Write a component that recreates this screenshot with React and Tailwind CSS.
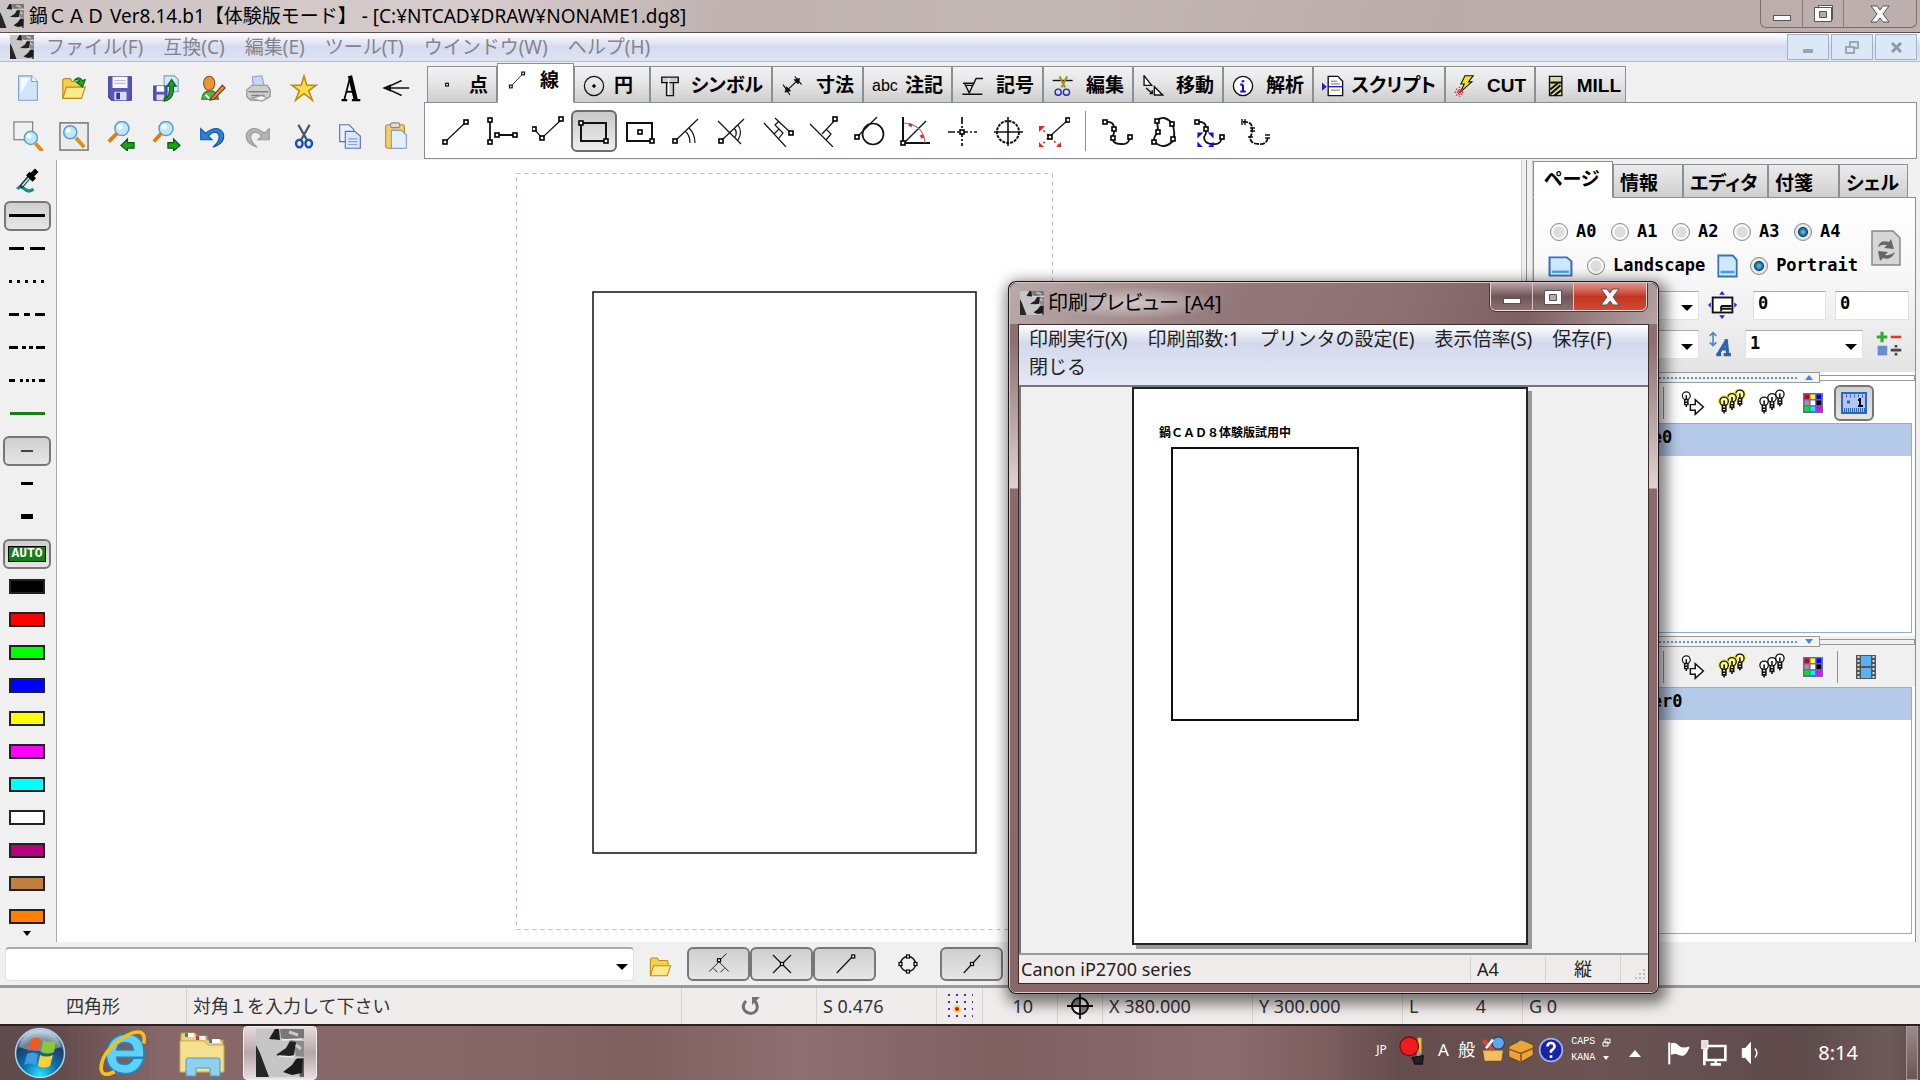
import React, { useState } from "react";
import clsx from "clsx";

/* ---------- shared drawing helpers ---------- */

const Node = ({ x, y }) => (
  <rect x={x - 2} y={y - 2} width="4" height="4" fill="#fff" stroke="#000" strokeWidth="1.6" />
);

const Ico = ({ size = 32, children, className }) => (
  <svg
    width={size}
    height={size}
    viewBox="0 0 32 32"
    fill="none"
    stroke="#111"
    strokeWidth="1.2"
    className={clsx("shrink-0", className)}
    aria-hidden="true"
  >
    {children}
  </svg>
);

const Logo = ({ className }) => (
  <svg viewBox="0 0 48 48" preserveAspectRatio="none" className={className} aria-hidden="true">
    <rect width="48" height="48" fill="#c6c6c6" />
    <path d="M0 16 L4 24 L10 40 L13 48 H0 Z" fill="#262626" />
    <path d="M24 0 H48 V9 L36 12 L25 9 Z" fill="#777" />
    <path d="M37 12 H48 V28 L40 27 Z" fill="#8a8a8a" />
    <path d="M41 29 H48 V48 H44 Z" fill="#5c5c5c" />
    <path d="M19 0 L13 10 L24 11 L23 0 Z" fill="#1c1c1c" />
    <path d="M34 12 L30 19 L20 26 L29 28 L38 26 L40 13 Z" fill="#222" />
    <path d="M40 30 L36 36 L27 43 L36 46 L46 44 L47 30 Z" fill="#1a1a1a" />
    <path d="M26 11 L46 10 M23 27 L38 28" stroke="#efefef" strokeWidth="1.5" />
    <path d="M33 3 L42 6 M40 16 L45 20" stroke="#c9c9c9" strokeWidth="3" />
  </svg>
);

const Lens = ({ cx, cy, r = 7 }) => (
  <>
    <circle cx={cx} cy={cy} r={r} fill="#bfe6fb" stroke="#5a9fd0" strokeWidth="1.6" />
    <circle cx={cx - 2} cy={cy - 2} r={r / 2.6} fill="#f4fcff" stroke="none" />
  </>
);

const Folder = () => (
  <>
    <path d="M4 27 V8 q0-2 2-2 h6 l2 3 h9 q2 0 2 2 v4" fill="#f3cf52" stroke="#b98a14" />
    <path d="M4 27 L8 15 H28 L24 27 Z" fill="#ffe98a" stroke="#b98a14" />
  </>
);

/* ---------- main toolbar ---------- */

const fileTools = [
  { name: "新規", icon: (<>
    <path d="M6 3 H20 L26 9 V29 H6 Z" fill="#cfe5fa" stroke="#7aa3cf" />
    <path d="M20 3 V9 H26" fill="#fff" stroke="#7aa3cf" />
    <path d="M8 5 H18 L8 22 Z" fill="#f3f9ff" stroke="none" /></>) },
  { name: "開く", icon: (<><Folder />
    <path d="M16 8 q5-6 9 0 l3-1 l-3 8 l-6-5 l3-1 q-2-3-6-1z" fill="#27a327" stroke="#0c6b0c" /></>) },
  { name: "保存", icon: (<>
    <path d="M4 4 H28 V29 H7 L4 26 Z" fill="#5a55b8" stroke="#3a3690" />
    <rect x="8" y="4" width="16" height="12" fill="#f6f6fc" stroke="none" />
    <path d="M10 8 H22 M10 11 H22" stroke="#b9b9cf" />
    <rect x="10" y="20" width="13" height="9" fill="#dcdcee" stroke="none" />
    <rect x="12" y="21" width="4" height="7" fill="#3a3690" stroke="none" /></>) },
  { name: "書き出し", icon: (<>
    <path d="M14 3 H25 L29 7 V20 H14 Z" fill="#d4e7fb" stroke="#7aa3cf" />
    <path d="M3 14 H17 V29 H3 Z" fill="#5a55b8" stroke="#3a3690" />
    <rect x="6" y="14" width="8" height="6" fill="#fff" stroke="none" />
    <rect x="6" y="23" width="8" height="6" fill="#dcdcee" stroke="none" />
    <path d="M14 27 q6 0 6-13 h-3 l5-7 l5 7 h-3 q1 14-10 16z" fill="#1f9d2c" stroke="#0b6316" /></>) },
  { name: "ユーザー", icon: (<>
    <path d="M5 28 q1-9 9-9 q8 0 9 9z" fill="#55b04a" stroke="#2e7a28" />
    <ellipse cx="13" cy="11" rx="6" ry="7.500" fill="#e8953a" stroke="#9a5410" />
    <path d="M15 27 L27 13 L30 16 L18 28 L14 29Z" fill="#f08a3c" stroke="#7a3a10" />
    <path d="M9 23 l4 4" stroke="#fff" strokeWidth="2" /></>) },
  { name: "印刷", icon: (<>
    <path d="M10 4 L20 3 L23 15 H11 Z" fill="#c9d6f5" stroke="#93a3cc" />
    <path d="M4 18 L10 13 H26 L29 18 V25 L22 29 H8 L4 25Z" fill="#cfcfcf" stroke="#8f8f8f" />
    <path d="M6 20 H27 M9 24 H23" stroke="#808080" strokeWidth="1.6" />
    <path d="M9 27 L20 24 L26 27 L20 30Z" fill="#f4f4f4" stroke="#999" /></>) },
  { name: "お気に入り", icon: (
    <path d="M16 3 L19 13 L29 13 L21 19 L25 29 L16 22 L7 29 L11 19 L3 13 L13 13Z" fill="#ffd84a" stroke="#b98a14" strokeWidth="1.6" />) },
  { name: "文字", icon: (<>
    <path d="M7 29 H13 M18 29 H27" stroke="#000" strokeWidth="2.500" />
    <path d="M10 28 L16 5" stroke="#000" strokeWidth="1.800" />
    <path d="M16 3 L22 28" stroke="#000" strokeWidth="4.500" />
    <path d="M12 20 H21" stroke="#000" strokeWidth="2" /></>) },
  { name: "引出", icon: (<>
    <path d="M3 16 H30 M7 15 L22 8 M7 17 L22 24" strokeWidth="1.600" />
    <path d="M3 16 L10 13 V19Z" fill="#111" /></>) },
];

const viewTools = [
  { name: "範囲拡大", icon: (<>
    <rect x="1" y="1" width="20" height="19" stroke="#777" />
    <Lens cx={19} cy={18} r={7} /><path d="M24 24 L32 33" stroke="#d8901c" strokeWidth="4" /></>) },
  { name: "全体表示", icon: (<>
    <rect x="1" y="2" width="30" height="29" fill="#ececec" stroke="#777" strokeWidth="1.600" />
    <Lens cx={12} cy={12} r={7} /><path d="M18 18 L27 28" stroke="#d8901c" strokeWidth="4" /></>) },
  { name: "前の表示", icon: (<>
    <Lens cx={18} cy={8} r={7.5} /><path d="M13 13 L4 22" stroke="#d8801c" strokeWidth="4" />
    <path d="M17 26 L24 19 V23 H31 V29 H24 V32Z" fill="#1f9d1f" stroke="#0b5a0b" /></>) },
  { name: "次の表示", icon: (<>
    <Lens cx={16} cy={8} r={7.5} /><path d="M11 13 L3 22" stroke="#d8801c" strokeWidth="4" />
    <path d="M31 26 L24 19 V23 H18 V29 H24 V32Z" fill="#1f9d1f" stroke="#0b5a0b" /></>) },
  { name: "元に戻す", icon: (
    <path d="M4 8 V20 H16 L12 16 Q19 9 23 14 Q26 20 17 28 Q31 23 28 13 Q22 3 9 13Z" fill="#2e7fd6" stroke="#0f55a5" />) },
  { name: "やり直し", icon: (
    <path d="M28 8 V20 H16 L20 16 Q13 9 9 14 Q6 20 15 28 Q1 23 4 13 Q10 3 23 13Z" fill="#b4b4b4" stroke="#999" />) },
  { name: "切り取り", icon: (<>
    <path d="M10 4 L19 20 M22 4 L13 20" stroke="#456" strokeWidth="2.400" />
    <ellipse cx="11" cy="24" rx="3.500" ry="4" stroke="#1c55b8" strokeWidth="2.600" />
    <ellipse cx="21" cy="24" rx="3.500" ry="4" stroke="#1c55b8" strokeWidth="2.600" /></>) },
  { name: "コピー", icon: (<>
    <path d="M5 4 H15 L20 9 V22 H5Z" fill="#eaf1fc" stroke="#5a6fb5" />
    <path d="M11 11 H21 L27 16 V29 H11Z" fill="#dbe8fb" stroke="#5a6fb5" />
    <path d="M14 19 H24 M14 22 H24 M14 25 H24" stroke="#8aa0d6" /></>) },
  { name: "貼り付け", icon: (<>
    <rect x="5" y="4" width="20" height="25" rx="2" fill="#f6cf6b" stroke="#b98a2a" />
    <rect x="10" y="2" width="10" height="5" rx="2" fill="#ddd" stroke="#888" />
    <path d="M11 10 H22 L27 15 V29 H11Z" fill="#e5effc" stroke="#7f9acb" /></>) },
];

const commandTabs = [
  { label: "点", width: "w-[70px]", pad: "pr-2", icon: <Node x={16} y={14} /> },
  { label: "線", width: "w-[77px]", pad: "pr-3.5", icon: (<><path d="M8 23 L24 6" /><Node x={7} y={24} /><Node x={25} y={5} /></>) },
  { label: "円", width: "w-[76px]", pad: "pr-4", icon: (<><circle cx="16" cy="16" r="14" strokeWidth="1.800" /><circle cx="16" cy="16" r="2" fill="#000" /></>) },
  { label: "シンボル", width: "w-[122px]", pad: "pr-2", icon: (<>
    <path d="M4 3 H28 V11 H4Z M11 11 V30 H21 V11" fill="#ccc" strokeWidth="2" /><path d="M14 5 V29" stroke="#fff" strokeWidth="2" /></>) },
  { label: "寸法", width: "w-[91px]", pad: "pr-2", icon: (<>
    <path d="M9 22 L24 8 M3 14 L13 29 M20 2 L30 14" strokeWidth="1.600" /><path d="M6 25 L8 17 L14 23Z M27 5 L25 13 L19 7Z" fill="#111" /></>) },
  { label: "注記", width: "w-[89px]", pad: "pr-2", text: "abc" },
  { label: "記号", width: "w-[91px]", pad: "pr-2", icon: (<path d="M3 12 H20 M5 12 L12 26 L22 5 H32 M2 28 H31 M6 15 H18" strokeWidth="2" />) },
  { label: "編集", width: "w-[90px]", pad: "pr-2", icon: (<>
    <path d="M1 8 H30" strokeWidth="2" /><path d="M11 2 L19 18 M22 2 L14 18" stroke="#99931c" strokeWidth="3" />
    <circle cx="9" cy="25" r="4.500" stroke="#22c" strokeWidth="2" /><circle cx="21" cy="25" r="4.500" stroke="#22c" strokeWidth="2" /></>) },
  { label: "移動", width: "w-[90px]", pad: "pr-2", icon: (<>
    <path d="M3 1 V15 H14Z M18 17 V29 H30Z" fill="#fff" strokeWidth="2" /><path d="M6 19 L15 27 M11 27 H15 V22" strokeWidth="2" /></>) },
  { label: "解析", width: "w-[90px]", pad: "pr-2", icon: (<>
    <circle cx="16" cy="16" r="14" fill="#fff" strokeWidth="2" /><path d="M16 14 V24 M12 14 H16 M12 24 H20 M14 9 H18" stroke="#11c" strokeWidth="3" /></>) },
  { label: "スクリプト", width: "w-[132px]", pad: "pr-2", icon: (<>
    <path d="M9 2 H23 L30 9 V30 H9Z" fill="#fff" strokeWidth="2" /><path d="M13 9 H22 M13 13 H26 M13 22 H26" stroke="#555" />
    <path d="M9 17 H30" stroke="#22c" strokeWidth="2" /><path d="M0 11 L7 17 L0 23Z" fill="#22c" stroke="none" /></>) },
  { label: "CUT", width: "w-[90px]", pad: "pr-2", icon: (<>
    <path d="M16 1 H28 L21 10 H26 L9 25 L15 13 H10Z" fill="#f4e52c" strokeWidth="1.600" />
    <path d="M3 20 L13 30 M3 30 L13 20 M8 17 V32 M1 25 H14" stroke="#e22" strokeDasharray="2 1.500" strokeWidth="2" /></>) },
  { label: "MILL", width: "w-[91px]", pad: "pr-1", icon: (<>
    <path d="M8 2 H26 V30 H8Z" fill="#d8d8a0" strokeWidth="2" /><path d="M9 11 H26" strokeWidth="3" />
    <path d="M9 28 L24 15 M9 21 L20 12 M15 30 L25 22" strokeWidth="3" /></>) },
];

const lineTools = [
  <><path d="M5 27 L26 7" /><Node x={5} y={27} /><Node x={26} y={7} /></>,
  <><path d="M4 5 V27 M11 20 H30" strokeWidth="1.800" /><Node x={4} y={5} /><Node x={4} y={27} /><Node x={11} y={20} /><Node x={29} y={20} /></>,
  <><path d="M2 14 L10 23 L30 4" /><Node x={2} y={14} /><Node x={10} y={23} /><Node x={29} y={4} /></>,
  <><path d="M3 8 H28 V26 H3Z" strokeWidth="2" /><Node x={3} y={8} /><Node x={28} y={26} /></>,
  <><path d="M3 8 H28 V26 H3Z" strokeWidth="2" /><Node x={16} y={17} /><Node x={28} y={26} /></>,
  <><path d="M5 26 L28 4 M15 16 Q20 20 20 28 M19 13 Q25 19 25 28" /><Node x={5} y={26} /></>,
  <><path d="M5 26 L28 4 M2 6 L25 29 M22 10 Q27 17 22 25 M18 13 Q22 17 19 22" /><Node x={5} y={26} /></>,
  <><path d="M2 8 L24 32 M13 3 L29 18 M12 19 L17 14 L13 10 L17 6 M17 14 L21 18 L17 23" /><Node x={29} y={18} /></>,
  <><path d="M2 9 L25 32 M28 4 L14 19 M18 14 L23 19 L18 25" /><Node x={27} y={4} /></>,
  <><circle cx="19" cy="19" r="10.500" strokeWidth="1.700" /><path d="M3 22 L23 2" /><Node x={3} y={22} /></>,
  <><path d="M3 2 V28 H30" strokeWidth="2" /><path d="M4 28 L26 6" /><path d="M4 8 Q24 10 25 28" stroke="#977" />
    <path d="M9 9 L12 11 M21 20 L23 23" stroke="#c33" strokeWidth="3" /><Node x={3} y={28} /></>,
  <><path d="M16 2 V31 M2 17 H31" strokeWidth="1.700" strokeDasharray="7 2 2 2" /><Node x={16} y={17} /></>,
  <><circle cx="16" cy="17" r="11" strokeWidth="2" strokeDasharray="3 1" /><path d="M16 2 V31 M2 17 H31 M11 17 H21 M16 11 V22" strokeWidth="1.600" /></>,
  <><path d="M11 22 L30 5" /><path d="M2 12 L22 32 M2 32 L11 22" stroke="#e22" strokeWidth="1.600" strokeDasharray="2 3" />
    <path d="M1 11 h6 l-6 6z M1 33 v-6 l6 6z M23 33 h-6 l6-6z" fill="#e22" stroke="none" /><Node x={12} y={22} /><Node x={30} y={5} /></>,
];

const curve = "M4 7 Q13 6 13 13 Q14 18 11 22 Q11 29 20 29 Q28 30 29 22";
const curveTools = [
  <><path d={curve} strokeWidth="1.800" /><Node x={4} y={7} /><Node x={13} y={14} /><Node x={12} y={23} /><Node x={29} y={22} /></>,
  <><path d="M10 6 Q16 -1 25 8 Q29 18 26 26 Q16 36 7 26 Q6 23 11 17 Q11 13 10 6Z" strokeWidth="1.800" />
    <Node x={10} y={6} /><Node x={25} y={9} /><Node x={26} y={24} /><Node x={11} y={17} /><Node x={7} y={27} /></>,
  <><path d={curve} strokeWidth="1.800" /><path d="M5 18 h4 l-4 4z M20 18 v4 l-4-4z M5 32 v-4 l4 4z M20 32 h-4 l4-4z" fill="#11e" stroke="#11e" />
    <Node x={4} y={7} /><Node x={13} y={14} /><Node x={29} y={22} /></>,
  <><path d={curve} strokeWidth="1.800" strokeDasharray="5 1" /><path d="M3 4 V10 M6 4 V10 M11 13 H16 M11 16 H16 M9 22 H14 M26 20 H31 M26 23 H31" strokeWidth="1.400" /></>,
];

const LeftTools = () => (
  <div className="flex w-[424px] flex-col gap-2 pl-[5px] pt-1.5">
    {[fileTools, viewTools].map((row, i) => (
      <div key={i} className="flex">
        {row.map((tool) => (
          <button key={tool.name} aria-label={tool.name} className="flex h-10 w-[46px] items-center justify-center">
            <Ico size={30}>{tool.icon}</Ico>
          </button>
        ))}
      </div>
    ))}
  </div>
);

const CommandPanel = () => {
  const [active, setActive] = useState("線");
  const [tool, setTool] = useState(3);

  return (
    <div className="flex flex-1 flex-col pr-[3px] pt-px">
      <div className="z-10 -mb-px flex h-10 items-end pl-[3px]">
        {commandTabs.map((tab) => (
          <button
            key={tab.label}
            onClick={() => setActive(tab.label)}
            className={clsx(
              "flex items-center justify-between overflow-hidden whitespace-nowrap border border-[#8c8e96] pl-2 text-[19px] font-bold leading-7 text-black",
              tab.width,
              tab.pad,
              active === tab.label
                ? "h-10 border-b-white bg-white pb-1"
                : "h-[37px] bg-gradient-to-b from-[#f2f2f2] via-[#e4e4e4] via-50% to-[#cdcdcd] pt-0.5"
            )}
          >
            {tab.text ? (
              <span className="text-[16px] font-normal">{tab.text}</span>
            ) : (
              <Ico size={22}>{tab.icon}</Ico>
            )}
            <span>{tab.label}</span>
          </button>
        ))}
      </div>
      <div className="flex h-[57px] items-center border border-[#8c8e96] bg-white pl-2">
        {lineTools.map((icon, i) => (
          <button
            key={i}
            aria-label={`線コマンド${i + 1}`}
            onClick={() => setTool(i)}
            className={clsx(
              "flex h-[42px] w-[46px] items-center justify-center",
              tool === i && "rounded-md border-2 border-[#6d6d6d] bg-gradient-to-b from-[#c9c9c9] to-[#ededed]"
            )}
          >
            <Ico>{icon}</Ico>
          </button>
        ))}
        <span className="mx-2 h-10 w-px bg-[#8c8e96]" />
        {curveTools.map((icon, i) => (
          <button key={i} aria-label={`曲線コマンド${i + 1}`} className="flex h-[42px] w-[46px] items-center justify-center">
            <Ico>{icon}</Ico>
          </button>
        ))}
      </div>
    </div>
  );
};

/* ---------- left palette ---------- */

const dashes = [
  ["実線", "0"],
  ["破線", "15 6"],
  ["点線", "3 5"],
  ["一点鎖線", "10 5 6 5"],
  ["二点鎖線", "9 4 4 3 4 3"],
  ["三点鎖線", "6 5 3 3 3 3 3 4"],
];

const swatches = [
  "bg-black", "bg-[#ff0000]", "bg-[#00ff00]", "bg-[#0000ff]", "bg-[#ffff00]", "bg-[#ff00ff]",
  "bg-[#00ffff]", "bg-white", "bg-[#b4007d]", "bg-[#c08040]", "bg-[#ff8000]",
];

const paletteCell = "flex h-[33px] w-[54px] shrink-0 items-center justify-center";
const pressed = "rounded-md border-2 border-[#777] bg-gradient-to-b from-[#cfcfcf] to-[#e6e6e6]";

const Palette = () => (
  <aside className="flex w-[57px] shrink-0 flex-col border-r border-[#aaa] bg-[#f0f0f0]">
    <div className="flex min-h-0 flex-1 flex-col overflow-hidden">
      <button aria-label="スポイト" className="flex h-[39px] w-[54px] shrink-0 items-center justify-center">
        <Ico size={26}>
          <path d="M4 27 Q8 22 13 27 T24 27" stroke="#1a8c94" strokeWidth="4" />
          <path d="M8 25 L20 11" stroke="#333" strokeWidth="5" />
          <path d="M10 23 L19 13" stroke="#8ff" strokeWidth="2" />
          <path d="M17 8 L25 16 M20 12 L28 4" stroke="#000" strokeWidth="6" />
        </Ico>
      </button>
      {dashes.map(([name, dash], i) => (
        <button key={name} aria-label={name} className={paletteCell}>
          <span className={clsx("flex h-[30px] w-[47px] items-center justify-center", i === 0 && pressed)}>
            <svg width="36" height="3"><path d="M0 1.500 H36" stroke="#000" strokeWidth="3" strokeDasharray={dash} /></svg>
          </span>
        </button>
      ))}
      <button aria-label="補助線" className={paletteCell}>
        <span className="h-[3px] w-[35px] bg-[#138013]" />
      </button>
      <button aria-label="細線" className={clsx(paletteCell, "mt-1")}>
        <span className={clsx("flex h-[30px] w-[48px] items-center justify-center", pressed)}>
          <span className="h-0.5 w-3 bg-[#444]" />
        </span>
      </button>
      <button aria-label="中線" className={paletteCell}><span className="h-[3px] w-3 bg-black" /></button>
      <button aria-label="太線" className={paletteCell}><span className="h-[5px] w-3 bg-black" /></button>
      <button className={clsx(paletteCell, "mt-1")}>
        <span className={clsx("flex h-[30px] w-[48px] items-center justify-center", pressed)}>
          <span className="border border-black bg-[#118011] px-0.5 font-['Liberation_Mono',monospace] text-[13px] font-bold leading-[14px] text-white">
            AUTO
          </span>
        </span>
      </button>
      {swatches.map((color, i) => (
        <button key={color} aria-label={`色${i + 1}`} className={paletteCell}>
          <span className={clsx("h-[15px] w-9 border-2 border-[#222]", color)} />
        </button>
      ))}
    </div>
    <button aria-label="下へ" className="flex h-[18px] w-[54px] items-center justify-center">
      <svg width="8" height="5"><path d="M0 0 H8 L4 5Z" /></svg>
    </button>
  </aside>
);

/* ---------- right side panel ---------- */

const sideTabs = [
  { label: "ページ", width: "w-[80px]" },
  { label: "情報", width: "w-[70px]" },
  { label: "エディタ", width: "w-[85px]" },
  { label: "付箋", width: "w-[71px]" },
  { label: "シェル", width: "w-[69px]" },
];

const Arrow = () => (
  <svg width="12" height="6" className="pointer-events-none absolute right-1.5 top-1/2"><path d="M0 0 H12 L6 6Z" /></svg>
);

const Select = ({ label, value, className }) => (
  <div className={clsx("relative h-[29px]", className)}>
    <select
      aria-label={label}
      defaultValue={value}
      className="h-full w-full appearance-none border border-[#e2e2e2] border-t-[#aaa] bg-white px-1 pb-1 font-bold"
    >
      <option>{value}</option>
    </select>
    <Arrow />
  </div>
);

const Radio = ({ name, label, defaultChecked, className }) => (
  <label className={clsx("flex items-center gap-2", className)}>
    <input
      type="radio"
      name={name}
      defaultChecked={defaultChecked}
      className="h-[18px] w-[18px] shrink-0 appearance-none rounded-full border border-[#8a8a8a] bg-[radial-gradient(circle,#ddd_45%,#fff_55%,#ccc)] checked:bg-[radial-gradient(circle,#4fb4e0_10%,#124a70_40%,#eee_50%,#ccc)]"
    />
    <span>{label}</span>
  </label>
);

const PageIcon = ({ wide }) => (
  <svg width={wide ? 25 : 21} height={wide ? 21 : 24} viewBox="0 0 24 24" preserveAspectRatio="none" className="shrink-0">
    <path d="M1.500 1.500 H18 L22.500 6 V22.500 H1.500Z" fill="#cfe8ff" stroke="#3a6fc0" strokeWidth="2" />
    <path d="M4 18 H20" stroke="#3f9fe8" strokeWidth="2.500" />
  </svg>
);

const Bulb = ({ x, y, lit }) => (
  <g transform={`translate(${x} ${y})`}>
    {lit && <circle cx="0" cy="0" r="7" fill="#f5f03c" stroke="none" />}
    <circle cx="0" cy="0" r="4.800" fill={lit ? "#fffb9a" : "#fff"} strokeWidth="1.500" />
    <path d="M-2 4 V11 H2 V4 M-2 8 H2 M0 11 V14 M0 -1 V4" strokeWidth="1.800" />
  </g>
);

const BulbRow = ({ lit }) => (
  <Ico size={28}>
    <Bulb x={25} y={6} lit={lit} /><Bulb x={16} y={10} lit={lit} /><Bulb x={7} y={14} lit={lit} />
  </Ico>
);

const gridColors = ["#d00", "#ff0", "#00f", "#999", "#fff", "#000", "#0e0", "#0ee", "#e0e"];

const LayerTools = ({ children }) => (
  <div className="flex h-10 items-center pl-[129px]">
    <span className="h-8 w-px bg-[#8c8e96]" />
    <button aria-label="次を表示" className="ml-3 flex w-8 justify-center">
      <Ico size={26}><Bulb x={9} y={7} /><path d="M14 18 H20 V12 L30 21 L20 30 V25 H14Z" fill="#fff" strokeWidth="1.800" /></Ico>
    </button>
    <button aria-label="全て表示" className="ml-2 flex w-8 justify-center"><BulbRow lit /></button>
    <button aria-label="全て非表示" className="ml-2 flex w-8 justify-center"><BulbRow /></button>
    <button aria-label="色" className="ml-[9px] flex w-8 justify-center">
      <svg width="20" height="20" viewBox="0 0 20 20">
        <rect width="20" height="20" fill="#6a63b8" />
        {gridColors.map((c, i) => (
          <rect key={i} x={1.5 + (i % 3) * 6} y={1.5 + Math.floor(i / 3) * 6} width="4.600" height="4.600" fill={c} />
        ))}
      </svg>
    </button>
    {children}
  </div>
);

const Splitter = ({ down }) => (
  <div className="flex h-[11px] items-center">
    <div className="flex h-full w-[286px] items-center justify-end gap-2 border border-[#999] bg-[#f4f4f4] pr-1.5">
      <span className="w-[254px] border-t-2 border-dotted border-[#5a9ad8]" />
      <svg width="8" height="5"><path d={down ? "M0 0 H8 L4 5Z" : "M0 5 H8 L4 0Z"} fill="#3a8ee0" /></svg>
    </div>
    <span className="h-1.5 flex-1 border-y border-r border-[#999]" />
  </div>
);

const LayerList = ({ name, className }) => (
  <ul className={clsx("border border-[#8fb0cc] bg-white", className)}>
    <li className="flex h-8 items-center border-b border-[#c4c4c4] bg-[#b5c9e8] pb-1 pl-[86px] text-[17px] font-bold">{name}</li>
  </ul>
);

const SidePanel = () => (
  <aside className="flex w-[387px] shrink-0 flex-col bg-[#f0f0f0] pr-1 pt-px font-['DejaVu_Sans_Mono','Noto_Sans_CJK_JP',monospace] text-[17px]">
    <div className="z-10 -mb-px flex h-[37px] items-end">
      {sideTabs.map((tab, i) => (
        <button
          key={tab.label}
          className={clsx(
            "flex items-center whitespace-nowrap border border-[#8c8e96] pl-1.5 font-['Noto_Sans_CJK_JP',sans-serif] text-[19px] font-bold leading-7 [font-feature-settings:'palt']",
            tab.width,
            i === 0 ? "h-[37px] border-b-white bg-white pb-1 pl-2.5" : "h-[34px] bg-gradient-to-b from-[#ececec] to-[#cfcfcf] pt-0.5"
          )}
        >
          {tab.label}
        </button>
      ))}
    </div>
    <div className="flex min-h-0 flex-1 flex-col border border-b-0 border-[#8c8e96] bg-white">
      <div className="flex h-[174px] flex-col bg-gradient-to-b from-white via-[#f6f6f6] to-[#e4e4e4] pl-3.5 pt-5 font-bold">
        <div className="flex h-[70px]">
          <div className="flex-1">
            <div className="flex h-7 items-center">
              {["A0", "A1", "A2", "A3", "A4"].map((size) => (
                <Radio key={size} name="paper" label={size} defaultChecked={size === "A4"} className="w-[61px] pl-0.5" />
              ))}
            </div>
            <div className="mt-1 flex h-8 items-center">
              <PageIcon wide />
              <Radio name="orient" label="Landscape" className="ml-3.5" />
              <span className="w-3" />
              <PageIcon />
              <Radio name="orient" label="Portrait" defaultChecked className="ml-3" />
            </div>
          </div>
          <button aria-label="更新" className="mr-3.5 mt-3 h-9">
            <svg width="30" height="36" viewBox="0 0 30 36">
              <path d="M1 1 H22 L29 8 V35 H1Z" fill="#d6d6d6" stroke="#888" strokeWidth="1.500" />
              <path d="M7 17 Q9 9 18 12 L20 9 L23 19 L13 18 L16 15 Q11 14 7 17Z M24 22 Q20 31 12 28 L9 31 L7 21 L17 22 L14 25 Q19 26 24 22Z" fill="#666" />
            </svg>
          </button>
        </div>
        <div className="mt-0.5 flex h-[30px] items-center">
          <Select label="縮尺" value="1/1" className="w-[151px]" />
          <Ico size={30} className="mx-[9px]">
            <rect x="5" y="8" width="21" height="16" fill="#fff" strokeWidth="2" />
            <path d="M14 17 H25 M14 17 V23 M14 20 H25" strokeWidth="2" />
            <path d="M12 5 L15 1 L18 5Z M12 27 L15 31 L18 27Z M3 13 L0 16 L3 19Z M28 13 L31 16 L28 19Z" fill="#22e" stroke="none" />
          </Ico>
          <input aria-label="X原点" defaultValue="0" className="ml-1.5 h-[29px] w-[73px] border border-[#e2e2e2] border-t-[#aaa] bg-white px-1 pb-1" />
          <input aria-label="Y原点" defaultValue="0" className="ml-[9px] h-[29px] w-[74px] border border-[#e2e2e2] border-t-[#aaa] bg-white px-1 pb-1" />
        </div>
        <div className="mt-[9px] flex h-[30px] items-center">
          <Select label="単位" value="mm" className="w-[151px]" />
          <Ico size={26} className="mx-[10px]">
            <path d="M5 3 V17 M1 6 L5 2 L9 6 M1 14 L5 18 L9 14" stroke="#4a86c6" strokeWidth="2" />
            <path d="M9 29 H15 M11 29 L22 11 M18 29 H27 M21 10 L23 28 M16 22 H23" stroke="#2f62a8" strokeWidth="4" />
          </Ico>
          <Select label="文字倍率" value="1" className="w-[118px]" />
          <Ico size={28} className="ml-3">
            <path d="M8 2 V14 M2 8 H14" stroke="#35a835" strokeWidth="3.500" />
            <path d="M18 8 H30" stroke="#d04030" strokeWidth="3" />
            <rect x="3" y="18" width="11" height="11" fill="#6a8cc8" stroke="none" />
            <path d="M18 23 H30 M24 17 V20 M24 26 V29" stroke="#444" strokeWidth="3" />
          </Ico>
        </div>
      </div>
      <Splitter />
      <LayerTools>
        <button aria-label="番号表示" className={clsx("ml-[5px] flex h-9 w-10 items-center justify-center", pressed)}>
          <svg width="26" height="22" viewBox="0 0 26 22">
            <rect x="1" y="1" width="24" height="20" fill="#b8c4f4" stroke="#2a66c8" strokeWidth="2" />
            <path d="M5 4 H24" stroke="#2a66c8" strokeWidth="3" strokeDasharray="1 3" />
            <path d="M3 18 H24" stroke="#2a66c8" strokeWidth="4" strokeDasharray="1 1" />
            <path d="M6 10 H9" stroke="#2a66c8" strokeWidth="3" /><path d="M19 6 V15 M17 8 H19 M17 14 H22" stroke="#000" strokeWidth="2" />
          </svg>
        </button>
      </LayerTools>
      <LayerList name="Page0" className="mr-[3px] h-[210px]" />
      <div className="h-[3px]" />
      <div className="bg-[#f0f0f0]">
        <Splitter down />
        <LayerTools>
          <span className="ml-2 h-8 w-px bg-[#8c8e96]" />
          <button aria-label="アニメ" className="ml-[18px]">
            <svg width="20" height="24" viewBox="0 0 20 24">
              <rect width="20" height="24" fill="#555" />
              <rect x="5" y="1" width="10" height="10" fill="#5ab0f0" />
              <rect x="5" y="13" width="10" height="10" fill="#5ab0f0" />
              <path d="M2.500 1 V24 M17.500 1 V24" stroke="#ddd" strokeWidth="2" strokeDasharray="2 2" />
            </svg>
          </button>
        </LayerTools>
      </div>
      <LayerList name="Layer0" className="mr-[3px] flex-1" />
      <div className="h-2" />
    </div>
  </aside>
);

/* ---------- print preview window ---------- */

const CaptionButtons = ({ active }) => (
  <div
    className={clsx(
      "flex h-7 overflow-hidden rounded-b-md border border-t-0",
      active ? "border-[#f0dcdc] outline outline-1 outline-[#4a3638]" : "border-[#7d6e6e]"
    )}
  >
    <button
      aria-label="最小化"
      className={clsx("flex w-[42px] items-end justify-center border-r pb-1.5", active ? "border-[#d8c4c4] bg-gradient-to-b from-[#b9a4a6] via-[#705558] via-50% to-[#8c7073]" : "border-[#8c7c7c]")}
    >
      <span className="h-1.5 w-[18px] border border-[#555] bg-white" />
    </button>
    <button
      aria-label="最大化"
      className={clsx("flex w-[41px] items-center justify-center border-r", active ? "border-[#d8c4c4] bg-gradient-to-b from-[#b9a4a6] via-[#705558] via-50% to-[#8c7073]" : "border-[#8c7c7c]")}
    >
      <svg width="22" height="20" viewBox="0 0 22 20" fill="#fff" stroke="#555">
        {!active && <path d="M6.500 1.500 H20.500 V15.500 H6.500Z" />}
        <path d="M2.500 3.500 H19.500 V17.500 H2.500Z" /><path d="M7.500 7.500 H14.500 V13.500 H7.500Z" fill="#b9a9a9" />
      </svg>
    </button>
    <button
      aria-label="閉じる"
      className={clsx("flex w-[72px] items-center justify-center", active && "bg-gradient-to-b from-[#e0948a] via-[#c43520] via-50% to-[#d04a30]")}
    >
      <svg width="20" height="18" viewBox="0 0 20 18">
        <path d="M1 1 H7 L10 5 L13 1 H19 L13 9 L19 17 H13 L10 13 L7 17 H1 L7 9Z" fill="#fff" stroke="#555" />
      </svg>
    </button>
  </div>
);

const previewMenus = ["印刷実行(X)", "印刷部数:1", "プリンタの設定(E)", "表示倍率(S)", "保存(F)", "閉じる"];

const PreviewWindow = () => (
  <section className="absolute left-[1008px] top-[281px] z-20 w-[651px] rounded-lg border-2 border-[#1c1416] bg-[linear-gradient(to_bottom,#8d7072_0px,#8d7072_60px,#dfd3d3_205px,#8a6a6b_206px,#876768)] px-2 pb-2 shadow-[3px_5px_14px_5px_rgba(0,0,0,0.5)] outline outline-1 -outline-offset-2 outline-[#d9c8c8]">
    <header className="-mx-2 flex h-[41px] items-start justify-between rounded-t-lg bg-[linear-gradient(115deg,#b9a9a9,#93787a_35%,#8d7072_60%,#7e6062_80%,#b4a4a4)] px-2.5">
      <div className="flex items-center gap-1 pt-1">
        <Logo className="h-6 w-6" />
        <h2 className="bg-[radial-gradient(closest-side,rgba(255,255,255,0.5),transparent)] text-[20px] leading-8 text-black [font-feature-settings:'palt']">
          印刷プレビュー [A4]
        </h2>
      </div>
      <CaptionButtons active />
    </header>
    <div className="border border-[#3c2c2e] bg-[#f0f0f0]">
      <nav className="flex h-[60px] flex-wrap content-start gap-x-5 bg-gradient-to-b from-white via-[#d3d9ec] via-30% to-[#e4e8f7] pl-2.5 text-[19px] leading-7 text-[#222]">
        {previewMenus.map((m) => (
          <button key={m}>{m}</button>
        ))}
      </nav>
      <div className="h-[568px] border-l-2 border-t-2 border-[#777] pl-[111px]">
        <div className="h-[558px] w-[396px] border-2 border-[#222] bg-white pl-[37px] pt-[36px] shadow-[4px_4px_0_#999]">
          <p className="-ml-3 text-[12px] font-bold leading-4 text-black">鍋ＣＡＤ８体験版試用中</p>
          <div className="mt-1.5 h-[274px] w-[188px] border-2 border-[#111]" />
        </div>
      </div>
      <footer className="flex h-[30px] items-center border-t-2 border-[#999] bg-[#f0ecec] pl-0.5 text-[18px] leading-6 text-[#222]">
        <span className="flex-1">Canon iP2700 series</span>
        <span className="w-[75px] border-l border-[#d4d0d0] pl-1.5">A4</span>
        <span className="w-[75px] border-l border-[#d4d0d0] text-center">縦</span>
        <span className="flex w-7 justify-end self-stretch border-l border-[#d4d0d0]">
          <svg width="16" height="16" className="self-end" fill="#bbb">
            <path d="M11 2h2v2h-2z M7 6h2v2h-2z M11 6h2v2h-2z M3 10h2v2h-2z M7 10h2v2h-2z M11 10h2v2h-2z" />
          </svg>
        </span>
      </footer>
    </div>
  </section>
);

/* ---------- bottom bars ---------- */

const snaps = [
  { name: "接点", on: true, width: "w-[63px]", icon: <><path d="M16 12 L26 2 M3 26 L16 13 L29 26 M9 22 L14 27 M23 22 L18 27" /><Node x={16} y={11} /></> },
  { name: "交点", on: true, width: "w-[63px]", icon: <><path d="M4 4 L28 28 M28 4 L4 28" strokeWidth="1.600" /><Node x={16} y={16} /></> },
  { name: "端点", on: true, width: "w-[63px]", icon: <><path d="M5 28 L26 6" strokeWidth="1.600" /><Node x={27} y={6} /></> },
  { name: "四半円点", on: false, width: "w-[64px]", icon: <><circle cx="16" cy="16" r="10" strokeWidth="2" /><Node x={16} y={6} /><Node x={16} y={26} /><Node x={6} y={16} /><Node x={26} y={16} /></> },
  { name: "線上点", on: true, width: "w-[63px]", icon: <><path d="M5 28 L27 4" strokeWidth="1.600" /><Node x={16} y={16} /></> },
];

const SnapBar = () => (
  <div className="flex h-[43px] shrink-0 items-center bg-[#f0f0f0] pl-[5px]">
    <div className="relative h-[34px] w-[629px]">
      <select aria-label="コマンド入力" className="h-full w-full appearance-none rounded-sm border border-[#e0e0e0] border-t-2 border-t-[#aaa] bg-white" />
      <Arrow />
    </div>
    <button aria-label="参照" className="mx-[13px] pt-1.5">
      <Ico size={27}><Folder /></Ico>
    </button>
    <div className="flex">
      {snaps.map((s) => (
        <button key={s.name} aria-label={s.name} className={clsx("flex h-[34px] items-center justify-center", s.width, s.on && pressed)}>
          <Ico size={24}>{s.icon}</Ico>
        </button>
      ))}
    </div>
  </div>
);

const statusCell = "flex h-full shrink-0 items-center border-l border-[#d6d2d2]";

const StatusBar = () => (
  <footer className="flex h-[39px] shrink-0 items-center border-t-[3px] border-[#999] bg-[#f0ecec] text-[18px] text-[#333]">
    <span className="w-[186px] shrink-0 text-center">四角形</span>
    <span className={clsx(statusCell, "w-[495px] pl-1.5")}>対角１を入力して下さい</span>
    <span className={clsx(statusCell, "w-[135px] justify-center pl-1")}>
      <svg width="22" height="22" viewBox="0 0 22 22" fill="none" stroke="#707078" strokeWidth="3">
        <path d="M6 6 Q1 11 5 16 Q11 21 16 16 Q19 11 15 6" /><path d="M20 2 H12 V10Z" fill="#707078" stroke="none" />
      </svg>
    </span>
    <span className={clsx(statusCell, "w-[120px] pl-1.5")}>S 0.476</span>
    <span className={clsx(statusCell, "w-[46px] justify-center")}>
      <svg width="26" height="26" viewBox="0 0 26 26">
        <circle cx="10" cy="16" r="4" fill="#ffd36a" />
        {[0, 1, 2, 3].map((r) => [0, 1, 2, 3].map((c) => (
          <rect key={`${r}${c}`} x={1 + c * 8} y={1 + r * 7} width="2" height="2" fill="#33c" />
        )))}
        <circle cx="10" cy="16" r="2" fill="#c21" />
      </svg>
    </span>
    <span className={clsx(statusCell, "w-[75px] justify-end pr-6")}>10</span>
    <span className={clsx(statusCell, "w-[45px] justify-center")}>
      <svg width="26" height="26" viewBox="0 0 26 26" fill="none" stroke="#111" strokeWidth="2">
        <circle cx="13" cy="13" r="8" fill="#fff" /><path d="M13 5 A8 8 0 0 0 5 13 H13Z M13 21 A8 8 0 0 0 21 13 H13Z" fill="#888" stroke="none" />
        <circle cx="13" cy="13" r="8" strokeWidth="1.500" /><path d="M13 0 V26 M0 13 H26" strokeWidth="1.800" />
      </svg>
    </span>
    <span className={clsx(statusCell, "w-[150px] pl-1.5")}>X 380.000</span>
    <span className={clsx(statusCell, "w-[150px] pl-1.5")}>Y 300.000</span>
    <span className={clsx(statusCell, "w-[120px] justify-between pl-1.5 pr-9")}>
      <span>L</span>
      <span>4</span>
    </span>
    <span className={clsx(statusCell, "flex-1 pl-1.5")}>G 0</span>
  </footer>
);

const Taskbar = () => (
  <nav className="flex h-14 shrink-0 items-center border-t-2 border-[#2b2022] bg-[linear-gradient(to_right,#5f4a4c_0px,#644c4e_60px,#876768_160px,#876768_460px,#80605f_640px,#8d6f71_800px,#805f61_1000px,#8b6c6e_1230px,#7d5f60_1320px,#654d4e_1400px,#6b5354_1600px,#5f4a4b_1800px,#6f5a5a_1890px,#5f4a4b)] text-white">
    <button aria-label="スタート" className="ml-3.5">
      <svg width="52" height="52" viewBox="0 0 52 52">
        <defs>
          <radialGradient id="orb" cx="50%" cy="95%" r="90%">
            <stop offset="0" stopColor="#22e4ff" /><stop offset=".4" stopColor="#0c6fae" /><stop offset=".75" stopColor="#1b3f66" /><stop offset="1" stopColor="#a9bfd0" />
          </radialGradient>
        </defs>
        <circle cx="26" cy="26" r="24.500" fill="url(#orb)" stroke="#a9d4ea" strokeWidth="1.500" />
        <path d="M5 20 Q10 3 26 3 Q42 3 47 20 Q26 28 5 20Z" fill="#fff" opacity=".35" />
        <path d="M17 12 Q21 9 27 12 L25 24 Q20 21 14 24Z" fill="#ef5a24" />
        <path d="M29 13 Q35 16 42 13 L40 25 Q34 28 27 25Z" fill="#8cc63a" />
        <path d="M13 27 Q18 24 24 27 L22 38 Q16 35 10 38Z" fill="#3d9be0" />
        <path d="M26 28 Q32 31 39 28 L36 39 Q31 42 24 39Z" fill="#ffcf33" />
      </svg>
    </button>
    <button aria-label="Internet Explorer" className="ml-[33px]">
      <svg width="50" height="50" viewBox="0 0 48 48">
        <path d="M43 29 H33 Q30 35 25 35 Q17 35 17 28 H43 Q45 6 26 6 Q9 7 7 25 Q7 43 26 44 Q39 43 43 29Z M17 21 Q18 14 25 14 Q32 14 33 21Z" fill="#5fd0f8" stroke="#1b86c8" strokeWidth="1.500" fillRule="evenodd" />
        <path d="M43 15 Q46 -2 27 7 Q2 22 2 39 Q3 48 15 42" fill="none" stroke="#f6c01c" strokeWidth="3.500" />
      </svg>
    </button>
    <button aria-label="エクスプローラー" className="ml-7">
      <svg width="50" height="50" viewBox="0 0 50 50">
        <path d="M4 5 H18 L20 8 H30 V12 H46 V44 H3Z" fill="#e9d083" stroke="#b99a4a" />
        <path d="M3 13 H28 L31 17 H47 V44 H3Z" fill="#f5e08f" stroke="#c7a950" />
        <path d="M8 5 h9 v4 h-9z M19 8 h9 v4 h-9z M32 11 h11 v4 h-11z" fill="#fff" />
        <path d="M8 5 h3 v4 h-3z" fill="#3a9a3a" /><path d="M19 8 h3 v4 h-3z" fill="#d33" /><path d="M32 11 h3 v4 h-3z" fill="#37c" />
        <path d="M9 32 q0-2 2-2 h30 q2 0 2 2 v16 h-10 v-8 h-14 v8 h-10z" fill="#8ed0ee" stroke="#4a9cc8" />
      </svg>
    </button>
    <button aria-label="鍋CAD" className="ml-4 flex h-[54px] w-[74px] items-center justify-center rounded border border-[#eee] bg-gradient-to-b from-[#e6dcdc] via-[#b9a6a8] to-[#e8e0e0]">
      <Logo className="h-12 w-12" />
    </button>
    <div className="ml-auto flex h-full items-center">
      <span className="w-[22px] pb-1.5 text-[12px]">JP</span>
      <Ico size={30} className="mb-1.5">
        <path d="M23 3 V20" stroke="#e8c04a" strokeWidth="4" /><path d="M22 17 V27" stroke="#999" strokeWidth="4" /><circle cx="12" cy="12" r="10" fill="#ee1c1c" stroke="#700" />
        <path d="M15 24 L27 22 L26 31 H18Z" fill="#222" />
      </Ico>
      <span className="w-[30px] pb-1.5 text-center text-[17px]">A</span>
      <span className="mr-1 pb-1.5 text-[17px]">般</span>
      <Ico size={28} className="mb-1.5">
        <path d="M4 16 H28 L26 29 H6Z" fill="#f0c060" stroke="#7a5010" /><path d="M5 5 L17 16" stroke="#e0442a" strokeWidth="5" />
        <circle cx="22" cy="8" r="7" fill="#5aa8f0" stroke="#246" /><path d="M16 4 L8 14" stroke="#fff" strokeWidth="3" />
      </Ico>
      <Ico size={28} className="mb-1.5">
        <path d="M2 12 L16 4 L30 10 V22 L16 30 L2 24Z" fill="#e9a53c" stroke="#6a4510" /><path d="M2 15 L16 20 L30 14 M16 20 V29" stroke="#8a5a14" strokeWidth="1.800" />
        <path d="M10 8 Q14 0 22 6" stroke="#555" strokeWidth="3" />
      </Ico>
      <Ico size={28} className="mb-1.5 ml-0.5">
        <circle cx="16" cy="16" r="13" fill="#1a22a8" stroke="#9ab0e8" strokeWidth="2" />
        <path d="M12 12 Q12 8 16 8 Q20 8 20 12 Q20 14 16 17 V19 M16 22 V25" stroke="#fff" strokeWidth="3" />
      </Ico>
      <div className="ml-1.5 w-10 pb-1.5 font-['Liberation_Mono',monospace] text-[10px] leading-4">
        <p className="flex items-center justify-between">CAPS <svg width="9" height="9" fill="none" stroke="#fff"><path d="M3 1 H8 V5 H3Z M1 4 H6 V8 H1Z" /></svg></p>
        <p className="flex items-center justify-between">KANA <svg width="8" height="4" fill="#fff"><path d="M0 0 H6 L3 4Z" /></svg></p>
      </div>
      <svg width="12" height="7" className="ml-[18px]" fill="#fff"><path d="M0 7 H12 L6 0Z" /></svg>
      <Ico size={26} className="ml-[25px]"><path d="M4 3 V30" stroke="#fff" strokeWidth="2.500" /><path d="M6 4 Q12 2 16 7 Q20 11 29 8 Q27 16 22 19 Q16 20 12 17 L6 18Z" fill="#fff" stroke="none" /></Ico>
      <Ico size={28} className="ml-2">
        <path d="M7 8 H29 V24 H7Z" fill="#5a484a" stroke="#fff" strokeWidth="3" /><path d="M18 24 V29 M12 29 H24 M5 12 V30" stroke="#fff" strokeWidth="3" />
        <rect x="2" y="2" width="7" height="9" fill="#ddd" stroke="#fff" />
      </Ico>
      <Ico size={24} className="ml-3"><path d="M3 10 H7 L14 2 V30 L7 22 H3Z" fill="#fff" stroke="#fff" /><path d="M20 10 Q25 16 20 22" stroke="#fff" strokeWidth="2" /></Ico>
      <time className="ml-[54px] text-[20px]">8:14</time>
      <button aria-label="デスクトップの表示" className="ml-12 mr-0.5 h-full w-3 border border-[#a89a9a] bg-gradient-to-b from-[#9a8a8a] to-[#6a5656]" />
    </div>
  </nav>
);

const menus = ["ファイル(F)", "互換(C)", "編集(E)", "ツール(T)", "ウインドウ(W)", "ヘルプ(H)"];

const mdiButton = "flex h-[26px] w-[42px] items-center justify-center border border-[#9fb2c6] bg-[#dbe9f6]";

const App = () => {
  return (
    <div className="relative flex h-screen flex-col overflow-hidden bg-[#f0f0f0] font-['Noto_Sans','Noto_Sans_CJK_JP',sans-serif] text-black">
      <header className="flex h-[33px] shrink-0 justify-between border-b border-[#5a4c4c] bg-[linear-gradient(100deg,#cdc3c2,#d6cccb_25%,#bfb2b1_38%,#c4b8b7_55%,#b9abaa_75%,#bcafae)] pr-[3px]">
        <div className="flex items-center gap-[5px]">
          <Logo className="h-6 w-6" />
          <h1 className="text-[19px] leading-8">鍋ＣＡＤ Ver8.14.b1【体験版モード】 - [C:¥NTCAD¥DRAW¥NONAME1.dg8]</h1>
        </div>
        <CaptionButtons />
      </header>

      <nav className="flex h-[29px] shrink-0 items-center justify-between border-b border-[#b4bccf] bg-gradient-to-b from-white via-[#d6dbee] via-50% to-[#dfe4f4] pl-2.5 pr-[3px]">
        <div className="flex items-center gap-5 text-[19px] leading-6 text-[#84848c]">
          <Logo className="-mr-2 h-6 w-6" />
          {menus.map((m) => (
            <button key={m}>{m}</button>
          ))}
        </div>
        <div className="flex gap-0.5">
          <button aria-label="子ウインドウ最小化" className={clsx(mdiButton, "items-end pb-1.5")}><span className="h-1 w-2.5 bg-[#9aa6b2]" /></button>
          <button aria-label="子ウインドウ復元" className={mdiButton}>
            <svg width="14" height="13" fill="none" stroke="#9aa6b2" strokeWidth="2"><path d="M5 5 V1 H13 V7 H10 M1 6 H9 V12 H1Z" /></svg>
          </button>
          <button aria-label="子ウインドウ閉じる" className={mdiButton}>
            <svg width="11" height="11" stroke="#8f9aa6" strokeWidth="3"><path d="M1 1 L10 10 M10 1 L1 10" /></svg>
          </button>
        </div>
      </nav>

      <div className="flex h-[98px] shrink-0 font-['Liberation_Sans','Noto_Sans_CJK_JP',sans-serif] [font-feature-settings:'palt']">
        <LeftTools />
        <CommandPanel />
      </div>

      <div className="flex min-h-0 flex-1">
        <Palette />
        <main className="min-w-0 flex-1 overflow-hidden bg-white">
          <svg width="100%" height="100%">
            <rect x="459.500" y="13.500" width="536" height="756" fill="none" stroke="#b4bfd4" strokeDasharray="4 4" />
            <rect x="536" y="132" width="383" height="561" fill="none" stroke="#111" strokeWidth="1.500" />
          </svg>
        </main>
        <div className="w-[12px] shrink-0 border-x border-[#ccc] bg-[#f0f0f0] px-1"><div className="h-full border-l border-[#8c8e96]" /></div>
        <SidePanel />
      </div>

      <SnapBar />
      <StatusBar />
      <Taskbar />
      <PreviewWindow />
    </div>
  );
};

export default App;
